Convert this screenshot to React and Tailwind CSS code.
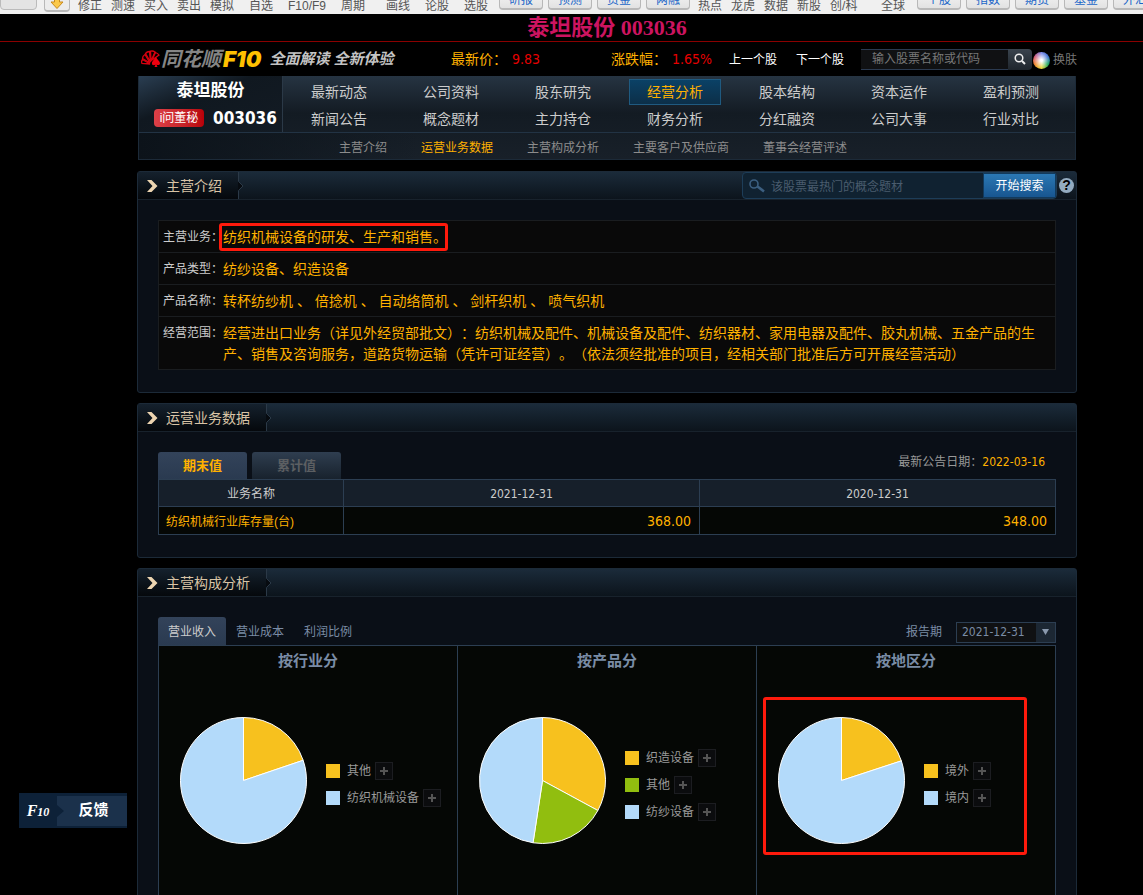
import React, { useState } from 'react';

const toolsLeft = ['修正', '测速', '买入', '卖出', '模拟'];
const toolsMid = ['研报', '预测', '资金', '两融'];
const toolsRight = ['热点', '龙虎', '数据', '新股', '创/科'];
const toolsEnd = ['个股', '指数', '期货', '基金', '外汇'];

const menu = [
    '最新动态', '公司资料', '股东研究', '经营分析', '股本结构', '资本运作', '盈利预测',
    '新闻公告', '概念题材', '主力持仓', '财务分析', '分红融资', '公司大事', '行业对比',
];
const subMenu = ['主营介绍', '运营业务数据', '主营构成分析', '主要客户及供应商', '董事会经营评述'];

const intro = [
    { label: '主营业务：', text: '纺织机械设备的研发、生产和销售。', marked: true },
    { label: '产品类型：', text: '纺纱设备、织造设备' },
    { label: '产品名称：', text: '转杯纺纱机 、 倍捻机 、 自动络筒机 、 剑杆织机 、 喷气织机' },
    {
        label: '经营范围：',
        text: '经营进出口业务（详见外经贸部批文）：纺织机械及配件、机械设备及配件、纺织器材、家用电器及配件、胶丸机械、五金产品的生产、销售及咨询服务，道路货物运输（凭许可证经营）。（依法须经批准的项目，经相关部门批准后方可开展经营活动）',
    },
];

const YELLOW = '#f7c11e';
const GREEN = '#91be0f';
const BLUE = '#b3dafa';

const charts = [
    {
        title: '按行业分',
        slices: [
            { name: '其他', value: 19.8, color: YELLOW },
            { name: '纺织机械设备', value: 80.2, color: BLUE },
        ],
    },
    {
        title: '按产品分',
        slices: [
            { name: '织造设备', value: 32.9, color: YELLOW },
            { name: '其他', value: 19.5, color: GREEN },
            { name: '纺纱设备', value: 47.6, color: BLUE },
        ],
    },
    {
        title: '按地区分',
        marked: true,
        slices: [
            { name: '境外', value: 19.95, color: YELLOW },
            { name: '境内', value: 80.05, color: BLUE },
        ],
    },
];

const ToolButton = ({ children }) => (
    <button className="flex h-6 w-11 shrink-0 items-end justify-center rounded-sm border border-[#b8b8b8] border-b-2 bg-linear-to-b from-[#fafafa] to-[#e2e2e2] leading-4 text-[#1a66c8]">
        {children}
    </button>
);

const Toolbar = () => (
    <div className="flex h-[14px] items-end overflow-hidden bg-[#f0f0f0] text-xs leading-4 whitespace-nowrap text-[#555]">
        <div className="flex w-[78px] shrink-0 items-end gap-[7px]">
            <button aria-label="返回" className="mb-1 h-6 w-[37px] rounded-sm border border-[#bbb] bg-[#e4e4e4]"></button>
            <button aria-label="下载" className="mb-[2px] flex h-6 w-[26px] items-end justify-center rounded-sm border border-b-2 border-[#b8b8b8] bg-[#ececec]">
                <svg width="14" height="16" viewBox="0 0 14 16">
                    <path d="M4.500 0V8H1L7 14.500L13 8H9.500V0Z" fill="#fbc94a" stroke="#c98a1c" />
                </svg>
            </button>
        </div>
        <div className="flex w-[171px] shrink-0 gap-[9px]">
            {toolsLeft.map((t) => <span key={t}>{t}</span>)}
        </div>
        <div className="flex w-[250px] shrink-0 gap-[15px]">
            <span>自选</span>
            <span>F10/F9</span>
            <span>周期</span>
            <span className="pl-[6px]">画线</span>
            <span>论股</span>
            <span>选股</span>
        </div>
        <div className="mb-1 flex w-[199px] shrink-0 gap-[5px]">
            {toolsMid.map((t) => <ToolButton key={t}>{t}</ToolButton>)}
        </div>
        <div className="flex w-[183px] shrink-0 gap-[9px]">
            {toolsRight.map((t) => <span key={t}>{t}</span>)}
        </div>
        <span className="w-9 shrink-0">全球</span>
        <div className="mb-1 flex shrink-0 gap-[5px]">
            {toolsEnd.map((t) => <ToolButton key={t}>{t}</ToolButton>)}
        </div>
    </div>
);

const Logo = () => (
    <a href="#" className="flex w-[314px] shrink-0 items-center pl-1 font-bold whitespace-nowrap italic">
        <svg width="20" height="18" viewBox="0 0 20 18" className="shrink-0">
            <g fill="none" stroke="#d8000f" strokeWidth="1.300">
                <path d="M9 14L1 13.500Q0 11 1.500 9.500Z" />
                <path d="M9 13L1.500 8.500Q1.500 6 4 4.500Z" />
                <path d="M9.500 12L4.500 3.500Q6 1.500 8.500 1.500Z" />
                <path d="M10 11L9.500 1.200Q12 0.500 14 2Z" />
                <path d="M11 10L14.500 2.500Q17 3.500 18 5Z" />
            </g>
            <path d="M15 7C13 10 10.500 11.500 11 14C11.500 15.500 13.500 15.500 14.500 14.500L13.500 17H16.500L15.500 14.500C17 15.500 19 15 19 13.500C19 11 16.500 10 15 7Z" fill="#f0000f" />
        </svg>
        <span className="text-[20px] leading-6 text-[#858585]">同花顺</span>
        <span className="ml-[2px] font-['Inter','Liberation_Sans',sans-serif] text-[22px] leading-6 font-black text-[#ffc000]">F10</span>
        <span className="ml-2 text-[15px] leading-6 text-[#c4c4c4]">全面解读 全新体验</span>
    </a>
);

const Header = () => (
    <header className="flex h-[34px] items-center text-xs whitespace-nowrap text-white">
        <Logo />
        <div className="flex w-[160px] shrink-0 items-center gap-[5px] text-sm text-[#ffb100]">
            最新价：<span className="font-['DejaVu_Sans_Condensed','Noto_Sans',sans-serif] text-[#e60000]">9.83</span>
        </div>
        <div className="flex w-[118px] shrink-0 items-center gap-[5px] text-sm text-[#ffb100]">
            涨跌幅：<span className="font-['DejaVu_Sans_Condensed','Noto_Sans',sans-serif] text-[#e60000]">1.65%</span>
        </div>
        <a href="#" className="w-[67px] shrink-0 pt-[2px]">上一个股</a>
        <a href="#" className="shrink-0 pt-[2px]">下一个股</a>
        <form className="ml-auto flex shrink-0 items-center" onSubmit={(e) => e.preventDefault()}>
            <input
                type="text"
                aria-label="股票名称或代码"
                placeholder="输入股票名称或代码"
                className="h-[21px] w-[147px] border-y border-[#2b3a50] bg-[#101113] pl-[11px] text-xs text-[#ccc] placeholder:text-[#777]"
            />
            <button aria-label="搜索" className="flex h-[21px] w-6 items-center justify-center rounded-r-sm bg-linear-to-b from-[#3a444e] to-[#1f262d]">
                <svg width="12" height="12" viewBox="0 0 12 12" fill="none" stroke="#eee">
                    <circle cx="5" cy="5" r="3.800" strokeWidth="1.500" />
                    <path d="M8 8L11 11" strokeWidth="2" />
                </svg>
            </button>
        </form>
        <button className="flex shrink-0 items-center pt-[2px] text-[#777]">
            <span className="mr-[3px] ml-px size-[17px] rounded-full bg-[radial-gradient(circle,#fff_8%,transparent_65%),conic-gradient(#7a8ae8,#3c6fd0,#19a65a,#e8d83a,#f0862e,#d05a78,#7a8ae8)]"></span>
            换肤
        </button>
    </header>
);

const Nav = () => (
    <nav className="mx-px border border-t-0 border-[#1c2a38] bg-linear-to-b from-[#263442] via-[#131b23] via-45% to-[#182029] whitespace-nowrap">
        <div className="flex h-[57px] border-b border-[#223344]">
            <div className="w-[144px] shrink-0 border-r border-[#2b3947] bg-linear-to-br from-[#2a3e52] via-[#101820] via-40% to-[#131b24] text-white">
                <div className="pt-[3px] text-center text-[17px] leading-6 font-bold">泰坦股份</div>
                <div className="flex items-center pt-[5px] pl-[15px]">
                    <a href="#" className="flex h-[18px] w-[50px] items-center justify-center rounded bg-linear-to-r from-[#dd4048] to-[#b80008] text-xs">i问董秘</a>
                    <span className="ml-[9px] font-['DejaVu_Sans_Condensed','Noto_Sans',sans-serif] text-[17px] leading-5 font-bold">003036</span>
                </div>
            </div>
            <ul className="grid h-[54px] grid-cols-[repeat(7,112px)] pt-[2px] text-sm text-[#ccc]">
                {menu.map((m) => (
                    <li key={m} className="flex h-[27px] items-center justify-center">
                        <a
                            href="#"
                            className={m === '经营分析'
                                ? 'flex h-[26px] w-[92px] items-center justify-center border border-[#1f5a80] bg-linear-to-b from-[#0a4166] to-[#0c2f48] text-[#ffb100]'
                                : ''}
                        >
                            {m}
                        </a>
                    </li>
                ))}
            </ul>
        </div>
        <ul className="flex h-[26px] items-center gap-[34px] bg-linear-to-r from-[#0c131a] to-transparent to-30% pt-[3px] pl-[200px] text-xs text-[#8c8c8c]">
            {subMenu.map((m) => (
                <li key={m}>
                    <a href="#" className={m === '运营业务数据' ? 'text-[#ffb100]' : ''}>{m}</a>
                </li>
            ))}
        </ul>
    </nav>
);

const Panel = ({ title, extra, children }) => (
    <section className="rounded-[3px] border border-[#1c2a38] bg-[#0a0f17]">
        <div className="flex h-7 justify-between border-b border-[#18222c] bg-linear-to-b from-[#1b2b3a] to-[#0c141c]">
            <div className="flex">
                <h2 className="flex items-center gap-2 bg-linear-to-b from-[#15212d] to-[#05080c] pr-4 pl-[9px] text-sm text-[#d9c4a6]">
                    <svg width="11" height="12" viewBox="0 0 11 12">
                        <path d="M0 0H4.500L10.500 6L4.500 12H0L5.500 6Z" fill="#ecd4b0" />
                    </svg>
                    {title}
                </h2>
                <svg width="6" height="27" viewBox="0 0 6 27" fill="none">
                    <path d="M0 0V9L5 14L0 19V27Z" fill="#070b10" />
                    <path d="M0.500 0V9.500L5 14L0.500 18.500V27" stroke="#2b3947" />
                </svg>
            </div>
            {extra}
        </div>
        {children}
    </section>
);

const TopicSearch = () => (
    <form className="flex items-center" onSubmit={(e) => e.preventDefault()}>
        <div className="flex h-[27px] items-center rounded-sm border border-[#1d3d58] bg-[#102231]">
            <svg width="16" height="14" viewBox="0 0 16 14" fill="none" stroke="#3c5f80" className="mx-[6px]">
                <circle cx="5" cy="5" r="4" strokeWidth="1.600" />
                <path d="M8.500 7.500L15 12.500" strokeWidth="2.600" />
            </svg>
            <input
                type="text"
                aria-label="概念题材"
                placeholder="该股票最热门的概念题材"
                className="h-[25px] w-[212px] bg-transparent pt-[2px] text-xs text-[#ccc] placeholder:text-[#4a5c6e]"
            />
            <button className="h-[25px] w-[73px] border border-[#123a5c] bg-linear-to-b from-[#2b78b4] to-[#185690] pt-px text-xs text-white">开始搜索</button>
        </div>
        <button aria-label="帮助" className="mx-[2px] size-[15px] rounded-full bg-[#93abc0] text-center font-['Liberation_Sans',sans-serif] text-sm leading-[15px] font-bold text-black">?</button>
    </form>
);

const Pie = ({ slices }) => {
    const c = 64.5;
    const r = 63;
    let sum = 0;
    const point = (percent) => {
        const a = (percent / 100) * Math.PI * 2;
        return `${c + r * Math.sin(a)} ${c - r * Math.cos(a)}`;
    };
    return (
        <svg width="128" height="128" viewBox="0 0 128 128" className="shrink-0">
            {slices.map((s) => {
                const start = point(sum);
                sum += s.value;
                return (
                    <path
                        key={s.name}
                        d={`M${c} ${c}L${start}A${r} ${r} 0 ${s.value > 50 ? 1 : 0} 1 ${point(sum)}Z`}
                        fill={s.color}
                        stroke="#fff"
                        strokeLinejoin="round"
                    />
                );
            })}
        </svg>
    );
};

const ChartCell = ({ chart }) => (
    <div className="relative h-[330px] flex-1 border-r border-[#2c3e52]">
        <h3 className="text-center text-[15px] leading-[30px] font-bold text-[#7a8ca5]">{chart.title}</h3>
        <div className="flex items-center gap-[19px] pt-10 pl-5">
            <Pie slices={chart.slices} />
            <ul className="flex flex-col gap-[9px] pt-[9px] text-xs whitespace-nowrap text-[#999]">
                {chart.slices.map((s) => (
                    <li key={s.name} className="flex h-[18px] items-center">
                        <span className="mr-[7px] size-[14px]" style={{ backgroundColor: s.color }}></span>
                        {s.name}
                        <button aria-label={`展开${s.name}`} className="ml-1 flex size-[18px] items-center justify-center border border-[#1c1d21] bg-[#0b0c0e]">
                            <svg width="8" height="8" viewBox="0 0 8 8" stroke="#555" strokeWidth="2">
                                <path d="M0 4H8M4 0V8" />
                            </svg>
                        </button>
                    </li>
                ))}
            </ul>
        </div>
        {chart.marked && (
            <div className="absolute top-[51px] left-[6px] h-[158px] w-[264px] rounded-[3px] border-3 border-[#ff1a0c]"></div>
        )}
    </div>
);

const App = () => {
    const [period, setPeriod] = useState('期末值');
    const [tab, setTab] = useState('营业收入');

    return (
        <div lang="zh-CN" className="h-screen overflow-hidden bg-black font-['Liberation_Sans','Noto_Sans_CJK_SC',sans-serif] [text-spacing-trim:space-all]">
            <Toolbar />
            <div className="border-b border-[#8b0000] pr-[66px] pl-[137px]">
                <h1 className="text-center font-['Liberation_Serif','Noto_Sans_CJK_SC',serif] text-[22px] leading-[27px] font-bold text-[#cc1460]">泰坦股份 003036</h1>
            </div>

            <div className="pr-[66px] pl-[137px]">
                <Header />
                <Nav />

                <main className="flex flex-col gap-[10px] pt-[11px]">
                    {/* 主营介绍 */}
                    <Panel title="主营介绍" extra={<TopicSearch />}>
                        <div className="px-5 pt-5 pb-[22px]">
                            <table className="w-full border border-[#1a1d20] bg-[#090909]">
                                <tbody>
                                {intro.map((row) => (
                                    <tr key={row.label} className="border-b border-[#1a1d20] align-top">
                                        <th className="w-16 pt-[6px] pb-1 pl-1 text-left text-xs leading-[21px] font-normal whitespace-nowrap text-[#ccc]">{row.label}</th>
                                        <td className="relative pt-[6px] pr-2 pb-1 text-sm leading-[21px] text-[#ffb100]">
                                            {row.text}
                                            {row.marked && (
                                                <span className="absolute top-[2px] -left-1 h-7 w-[229px] rounded-[3px] border-3 border-[#ff1a0c]"></span>
                                            )}
                                        </td>
                                    </tr>
                                ))}
                                </tbody>
                            </table>
                        </div>
                    </Panel>

                    {/* 运营业务数据 */}
                    <Panel title="运营业务数据">
                        <div className="px-5 pt-5 pb-[22px]">
                            <div className="flex items-start justify-between">
                                <div className="flex gap-[5px]">
                                    {['期末值', '累计值'].map((p) => (
                                        <button
                                            key={p}
                                            onClick={() => setPeriod(p)}
                                            className={p === period
                                                ? 'h-[27px] w-[89px] rounded-t-[3px] bg-linear-to-b from-[#33435a] to-[#2a3a50] pt-px text-[13px] font-bold text-[#ffb100]'
                                                : 'h-[27px] w-[89px] rounded-t-[3px] bg-linear-to-b from-[#2f3e50] to-[#18222d] pt-px text-[13px] font-bold text-[#5c5f62]'}
                                        >
                                            {p}
                                        </button>
                                    ))}
                                </div>
                                <p className="pr-[11px] text-xs leading-5 text-[#999]">
                                    最新公告日期：<span className="font-['DejaVu_Sans_Condensed','Noto_Sans',sans-serif] text-[#ffb100]">2022-03-16</span>
                                </p>
                            </div>
                            <table className="w-full table-fixed bg-[#050705] text-xs [&_td]:border [&_td]:border-[#2c3e52] [&_th]:border [&_th]:border-[#2c3e52]">
                                <thead>
                                <tr className="h-[27px] bg-[#161f2a] text-[#ccc]">
                                    <th className="w-[185px] pt-[2px] font-normal">业务名称</th>
                                    <th className="pt-[2px] font-['DejaVu_Sans_Condensed','Noto_Sans',sans-serif] font-normal">2021-12-31</th>
                                    <th className="pt-[2px] font-['DejaVu_Sans_Condensed','Noto_Sans',sans-serif] font-normal">2020-12-31</th>
                                </tr>
                                </thead>
                                <tbody>
                                <tr className="h-7 text-[#ffb100]">
                                    <td className="pt-[2px] pl-[7px]">纺织机械行业库存量(台)</td>
                                    <td className="pr-2 text-right font-['DejaVu_Sans_Condensed','Noto_Sans',sans-serif] text-sm">368.00</td>
                                    <td className="pr-2 text-right font-['DejaVu_Sans_Condensed','Noto_Sans',sans-serif] text-sm">348.00</td>
                                </tr>
                                </tbody>
                            </table>
                        </div>
                    </Panel>

                    {/* 主营构成分析 */}
                    <Panel title="主营构成分析">
                        <div className="px-5 pt-5 pb-[22px]">
                            <div className="flex items-center justify-between text-xs text-[#7a8ca5]">
                                <div className="flex">
                                    {['营业收入', '营业成本', '利润比例'].map((t) => (
                                        <button
                                            key={t}
                                            onClick={() => setTab(t)}
                                            className={t === tab
                                                ? 'h-7 w-[68px] rounded-t-[3px] bg-linear-to-b from-[#33435a] to-[#2a3a50] pt-[2px] text-[#ccc]'
                                                : 'h-7 w-[68px] pt-[2px]'}
                                        >
                                            {t}
                                        </button>
                                    ))}
                                </div>
                                <div className="flex items-center gap-[14px] pt-[2px]">
                                    <label htmlFor="report">报告期</label>
                                    <div className="relative">
                                        <select id="report" className="block h-[21px] w-[100px] appearance-none border border-[#2c3e52] bg-[#101113] pl-[5px] font-['DejaVu_Sans_Condensed','Noto_Sans',sans-serif] text-xs">
                                            <option>2021-12-31</option>
                                        </select>
                                        <span className="pointer-events-none absolute top-px right-px flex h-[19px] w-[19px] items-center justify-center bg-[#1c2733]">
                                            <svg width="7" height="6" viewBox="0 0 7 6">
                                                <path d="M0 0H7L3.500 6Z" fill="#8a99ad" />
                                            </svg>
                                        </span>
                                    </div>
                                </div>
                            </div>
                            <div className="flex border-y border-l border-[#2c3e52] bg-[#050705]">
                                {charts.map((c) => <ChartCell key={c.title} chart={c} />)}
                            </div>
                        </div>
                    </Panel>
                </main>
            </div>

            <button className="fixed top-[793px] left-[19px] flex h-[35px] w-[108px] items-center bg-[#0d2138] text-white">
                <span className="w-[38px] font-['Liberation_Serif',serif] text-base leading-5 font-bold italic">F<span className="text-xs">10</span></span>
                <span className="flex h-[30px] flex-1 items-center bg-[#1b314b]">
                    <svg width="7" height="12" viewBox="0 0 7 12">
                        <path d="M0 0L7 6L0 12Z" fill="#0d2138" />
                    </svg>
                    <span className="flex-1 pr-1 text-[15px] font-bold">反馈</span>
                </span>
            </button>
        </div>
    );
};

export default App;
